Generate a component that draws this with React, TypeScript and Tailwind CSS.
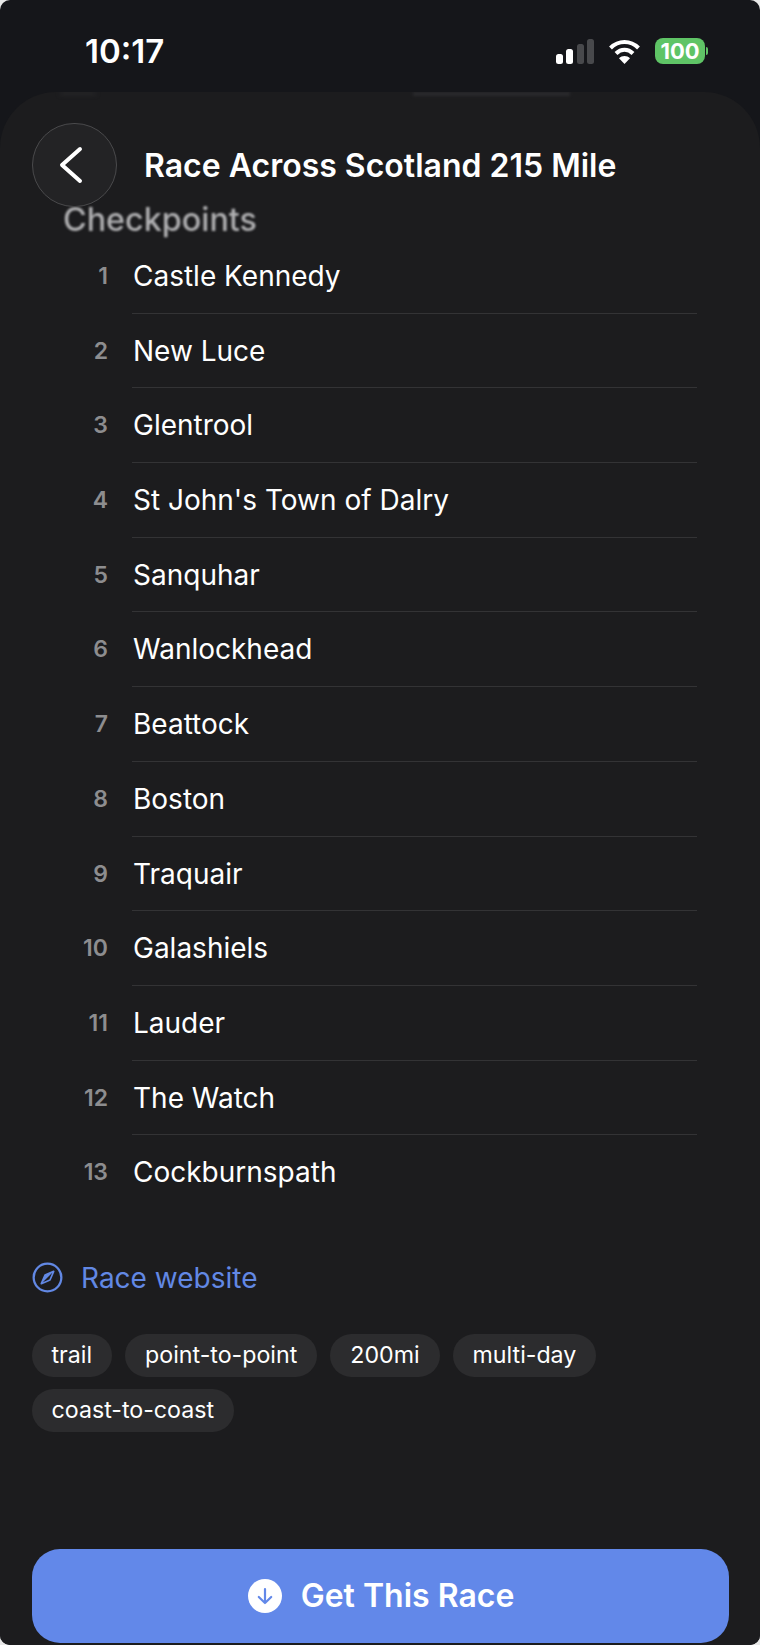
import React from "react";

const checkpoints = [
  "Castle Kennedy",
  "New Luce",
  "Glentrool",
  "St John's Town of Dalry",
  "Sanquhar",
  "Wanlockhead",
  "Beattock",
  "Boston",
  "Traquair",
  "Galashiels",
  "Lauder",
  "The Watch",
  "Cockburnspath",
];

const tags = ["trail", "point-to-point", "200mi", "multi-day", "coast-to-coast"];

function StatusBar() {
  return (
    <div className="h-[92px] shrink-0 flex items-start justify-between pt-[31px] pl-[85px] pr-[52px]">
      <span className="text-[33px] leading-[40px] font-semibold text-white">10:17</span>
      <div className="flex items-center gap-[14px] pt-[7px]">
        <svg width="38" height="25" viewBox="0 0 38 25">
          <rect x="0" y="15" width="7" height="10" rx="2.5" fill="#fff" />
          <rect x="10" y="10" width="7" height="15" rx="2.5" fill="#fff" />
          <rect x="21" y="5" width="7" height="20" rx="2.5" fill="#48494c" />
          <rect x="31" y="0" width="7" height="25" rx="2.5" fill="#48494c" />
        </svg>
        <svg width="33" height="25" viewBox="0 0 32 25" fill="none" stroke="#fff" strokeWidth="4" strokeLinecap="butt">
          <path d="M2 9 C10 1 22 1 30 9" />
          <path d="M7.5 14.5 C12.5 9.5 19.5 9.5 24.5 14.5" />
          <path d="M16 25 L10.5 19.2 C13.5 16.4 18.5 16.4 21.5 19.2 Z" fill="#fff" stroke="none" />
        </svg>
        <div className="flex items-center">
          <div className="w-[50px] h-[26px] rounded-[8px] bg-[#5fc466] text-white text-[22px] leading-[26px] font-bold text-center">
            100
          </div>
          <div className="w-[2px] h-[8px] ml-[1px] rounded-r-full bg-[#5fc466]" />
        </div>
      </div>
    </div>
  );
}

function Row({ index, name, last }: { index: number; name: string; last: boolean }) {
  return (
    <li className="flex h-[74.7px]">
      <span className="w-[78px] pt-[1px] text-right text-[23px] font-semibold leading-[72px] text-[#8d8d8f]">{index}</span>
      <div className={"ml-[24px] w-[565px] pl-[1px] pt-[1px] text-[28px] leading-[72px] text-white " + (last ? "" : "border-b border-[#333335]")}>
        {name}
      </div>
    </li>
  );
}

export default function App() {
  return (
    <div className="w-[760px] h-[1645px] bg-[#e8e8e8]">
      <div className="relative w-full h-full rounded-[10px] overflow-hidden bg-[#15161a] font-['Inter',sans-serif]">
        <StatusBar />
        <main className="relative overflow-hidden h-[1553px] rounded-t-[56px] bg-[#1c1c1e] flex flex-col">
          {/* Content scrolled under the header, smeared by the frosted bar */}
          <div className="absolute left-[60px] top-0 w-[36px] h-[3px] bg-[#262629] blur-[2px]" />
          <div className="absolute left-[413px] top-0 w-[157px] h-[4px] bg-[#2a2a2d] blur-[1.5px]" />

          <div className="h-[147px] shrink-0 pl-[63px] pt-[110px]">
            <span className="text-[32.3px] leading-[36px] font-medium text-[#b0b0b2] blur-[1.2px] block">Checkpoints</span>
          </div>
          <ol className="pl-[30px]">
            {checkpoints.map((name, i) => (
              <Row key={name} index={i + 1} name={name} last={i === checkpoints.length - 1} />
            ))}
          </ol>
          <a className="mt-[48px] ml-[32px] flex items-center gap-[18px] text-[28px] leading-[40px] text-[#6288e4]">
            <svg width="31" height="31" viewBox="0 0 30 30" fill="none" stroke="#6288e4" strokeWidth="2.2">
              <circle cx="15" cy="15" r="13.4" />
              <path d="M21 9 L17.4 17.4 L9 21 L12.6 12.6 Z" strokeWidth="1.6" strokeLinejoin="round" />
              <path d="M21 9 L9 21 L12.6 12.6 Z" fill="#6288e4" stroke="none" />
            </svg>
            Race website
          </a>
          <div className="mt-[36px] ml-[31.5px] w-[650px] flex flex-wrap gap-x-[13px] gap-y-[12px]">
            {tags.map((t) => (
              <span key={t} className="h-[43px] rounded-full bg-[#2c2c2e] px-[20px] text-[23.2px] leading-[43px] text-white">
                {t}
              </span>
            ))}
          </div>
          <div className="mt-auto mb-[2px] ml-[31.5px] mr-[31.5px] pl-[2px] h-[94px] rounded-[28px] bg-[#6288e9] flex items-center justify-center gap-[19px]">
            <svg width="34" height="34" viewBox="0 0 34 34">
              <circle cx="17" cy="17" r="17" fill="#fff" />
              <path d="M17 10 V24 M10.8 18 L17 24 L23.2 18" fill="none" stroke="#6288e9" strokeWidth="2.2" strokeLinecap="round" strokeLinejoin="round" />
            </svg>
            <span className="text-[32px] font-semibold text-white">Get This Race</span>
          </div>
        </main>

        {/* Floating navigation over the scrolled content */}
        <div className="absolute left-[31.5px] top-[123px] flex items-center">
          <button className="w-[85px] h-[84px] rounded-full bg-[#232325] border-[1.5px] border-[#4a4a4c] flex items-center justify-center">
            <svg width="26" height="40" viewBox="0 0 26 40" fill="none" stroke="#fff" strokeWidth="4" strokeLinecap="round" strokeLinejoin="round" className="mr-[7px]">
              <path d="M22 4 L4 20 L22 36" />
            </svg>
          </button>
          <h1 className="ml-[27.5px] mt-[1px] text-[32px] font-semibold text-white">Race Across Scotland 215 Mile</h1>
        </div>
      </div>
    </div>
  );
}
